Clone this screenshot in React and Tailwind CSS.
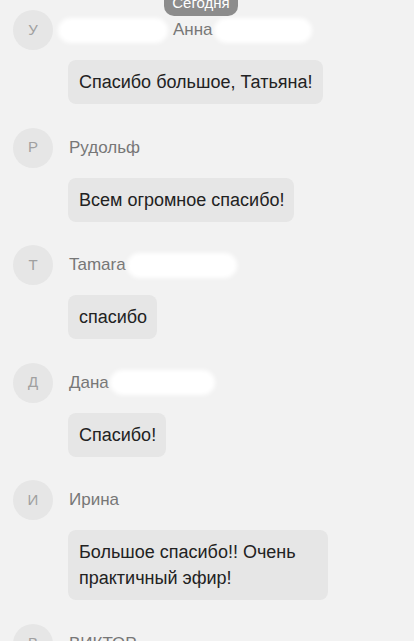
const messages = [
    { letter: 'У', name: 'Анна', text: 'Спасибо большое, Татьяна!', blurBefore: 110, blurAfter: 98 },
    { letter: 'Р', name: 'Рудольф', text: 'Всем огромное спасибо!' },
    { letter: 'Т', name: 'Tamara', text: 'спасибо', blurAfter: 110 },
    { letter: 'Д', name: 'Дана', text: 'Спасибо!', blurAfter: 105 },
    { letter: 'И', name: 'Ирина', text: 'Большое спасибо!! Очень практичный эфир!' },
    { letter: 'В', name: 'ВИКТОР', text: '' },
];

const Blob = ({ width, className }) => (
    <span
        className={`inline-block h-[25px] rounded-full bg-white blur-[2px] ${className}`}
        style={{ width }}
    />
);

export default function App() {
    return (
        <div
            className="relative w-[414px] h-[641px] overflow-hidden bg-[#f2f2f2]"
            style={{ fontFamily: '"Liberation Sans", Arial, sans-serif' }}
        >
            {/* date pill */}
            <div className="absolute z-10 left-[164px] top-[-10px] w-[74px] h-[26px] rounded-[10px] bg-[#8c8c8c] text-white text-[15px] leading-[26px] text-center">
                Сегодня
            </div>

            <div className="flex flex-col gap-[23.5px] pt-[10px]">
                {messages.map((m, i) => (
                    <div key={i} className="flex flex-col">
                        <div className="flex items-center h-[40px]">
                            <div className="ml-[13px] w-[40px] h-[40px] shrink-0 rounded-full bg-[#e6e6e6] flex items-center justify-center text-[15px] text-[#a0a0a0]">
                                {m.letter}
                            </div>
                            <div className="ml-[16px] flex items-center text-[17px] leading-[24px] text-[#777]">
                                {m.blurBefore && <Blob width={m.blurBefore} className="-ml-[11px] mr-[5px]" />}
                                <span>{m.name}</span>
                                {m.blurAfter && <Blob width={m.blurAfter} className="ml-[1px]" />}
                            </div>
                        </div>
                        {m.text && (
                            <div className="ml-[68px] mt-[10px] self-start max-w-[260px] rounded-[8px] bg-[#e6e6e6] pl-[11px] pr-[10px] py-[9px] text-[18px] leading-[26px] text-[#222]">
                                {m.text}
                            </div>
                        )}
                    </div>
                ))}
            </div>
        </div>
    );
}
